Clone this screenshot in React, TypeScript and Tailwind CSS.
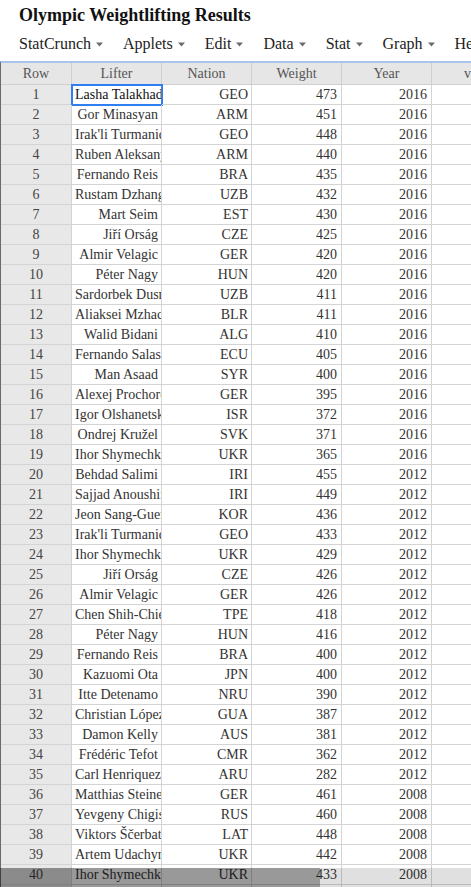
import React from "react";

const rows: [string, string, number, number][] = [
  ["Lasha Talakhadze", "GEO", 473, 2016],
  ["Gor Minasyan", "ARM", 451, 2016],
  ["Irak'li Turmanidze", "GEO", 448, 2016],
  ["Ruben Aleksanyan", "ARM", 440, 2016],
  ["Fernando Reis", "BRA", 435, 2016],
  ["Rustam Dzhangabaev", "UZB", 432, 2016],
  ["Mart Seim", "EST", 430, 2016],
  ["Jiří Orság", "CZE", 425, 2016],
  ["Almir Velagic", "GER", 420, 2016],
  ["Péter Nagy", "HUN", 420, 2016],
  ["Sardorbek Dusmurotov", "UZB", 411, 2016],
  ["Aliaksei Mzhachyk", "BLR", 411, 2016],
  ["Walid Bidani", "ALG", 410, 2016],
  ["Fernando Salas", "ECU", 405, 2016],
  ["Man Asaad", "SYR", 400, 2016],
  ["Alexej Prochorow", "GER", 395, 2016],
  ["Igor Olshanetskyi", "ISR", 372, 2016],
  ["Ondrej Kružel", "SVK", 371, 2016],
  ["Ihor Shymechko", "UKR", 365, 2016],
  ["Behdad Salimi", "IRI", 455, 2012],
  ["Sajjad Anoushiravani", "IRI", 449, 2012],
  ["Jeon Sang-Guen", "KOR", 436, 2012],
  ["Irak'li Turmanidze", "GEO", 433, 2012],
  ["Ihor Shymechko", "UKR", 429, 2012],
  ["Jiří Orság", "CZE", 426, 2012],
  ["Almir Velagic", "GER", 426, 2012],
  ["Chen Shih-Chieh", "TPE", 418, 2012],
  ["Péter Nagy", "HUN", 416, 2012],
  ["Fernando Reis", "BRA", 400, 2012],
  ["Kazuomi Ota", "JPN", 400, 2012],
  ["Itte Detenamo", "NRU", 390, 2012],
  ["Christian López", "GUA", 387, 2012],
  ["Damon Kelly", "AUS", 381, 2012],
  ["Frédéric Tefot", "CMR", 362, 2012],
  ["Carl Henriquez", "ARU", 282, 2012],
  ["Matthias Steiner", "GER", 461, 2008],
  ["Yevgeny Chigishev", "RUS", 460, 2008],
  ["Viktors Ščerbatihs", "LAT", 448, 2008],
  ["Artem Udachyn", "UKR", 442, 2008],
  ["Ihor Shymechko", "UKR", 433, 2008],
  ["Andrei Aramnau", "BLR", 436, 2008],
];

const menus = ["StatCrunch", "Applets", "Edit", "Data", "Stat", "Graph", "Help"];

function Caret() {
  return (
    <svg width="8" height="5" viewBox="0 0 8 5" className="ml-[5px] mt-[1px]">
      <polygon points="0,0.5 7,0.5 3.5,4.5" fill="#6b6b6b" />
    </svg>
  );
}

const cell =
  "h-[20px] border-r border-b border-[#d4d4d4] overflow-hidden whitespace-nowrap leading-[20px]";

export default function App() {
  return (
    <div
      className="relative w-[471px] h-[887px] overflow-hidden bg-white text-[#333]"
      style={{ fontFamily: '"Liberation Serif", "Times New Roman", serif' }}
    >
      <div className="pl-[19px] pt-[4px] h-[30px] text-[18px] leading-[22px] font-bold text-[#111]">
        Olympic Weightlifting Results
      </div>
      <div className="pl-[19px] h-[28px] flex items-center text-[16px] text-[#222] whitespace-nowrap">
        {menus.map((m) => (
          <div key={m} className="flex items-center mr-[19px] shrink-0">
            <span>{m}</span>
            <Caret />
          </div>
        ))}
      </div>
      <div className="h-[3px]" />
      <div className="border-t-2 border-[#a9c5ec] border-l border-l-[#6a6a6a] w-max text-[14px]">
        <div className="flex bg-[#e6e6e6] text-[#555]">
          <div className="w-[71px] h-[22px] leading-[21px] border-r border-b border-[#cfcfcf] text-center">Row</div>
          {["Lifter", "Nation", "Weight", "Year", "var6", "var7"].map((h) => (
            <div
              key={h}
              className="w-[90px] h-[22px] leading-[21px] border-r border-b border-[#cfcfcf] text-center"
            >
              {h}
            </div>
          ))}
        </div>
        {rows.map((r, i) => (
          <div key={i} className="flex">
            <div className={`${cell} w-[71px] bg-[#e8e8e8] text-center text-[#444]`}>{i + 1}</div>
            <div
              className={`${cell} w-[90px] text-right pl-[3px] pr-[3px] ${
                i === 0 ? "outline-2 outline-[#2f7ff0] -outline-offset-1 text-[#111]" : ""
              }`}
            >
              {r[0]}
            </div>
            <div className={`${cell} w-[90px] text-right pr-[3px]`}>{r[1]}</div>
            <div className={`${cell} w-[90px] text-right pr-[4px]`}>{r[2]}</div>
            <div className={`${cell} w-[90px] text-right pr-[4px]`}>{r[3]}</div>
            <div className={`${cell} w-[90px]`}></div>
            <div className={`${cell} w-[90px]`}></div>
          </div>
        ))}
      </div>
      <div className="absolute left-0 right-0 bottom-0 h-[19px] flex">
        <div className="w-[320px] h-full bg-black/40" />
        <div className="flex-1 h-full bg-black/[0.12]" />
      </div>
    </div>
  );
}
